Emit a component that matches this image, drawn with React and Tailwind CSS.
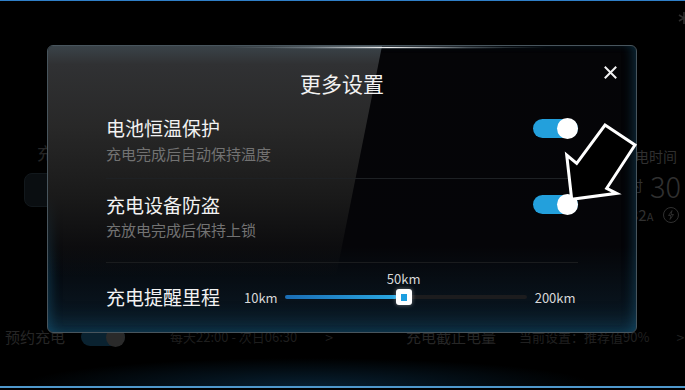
import React from 'react'

const Toggle = () => (
  <div className="w-[45px] h-[19px] rounded-full bg-[#23a0dc] flex items-center justify-end shrink-0">
    <div className="w-[21px] h-[21px] rounded-full bg-white shrink-0" />
  </div>
)

const SettingRow = ({ title, desc, top, bottom }) => (
  <div className={`flex flex-col ${top}`}>
    <div className="flex items-center justify-between h-[24px]">
      <span className="text-[19px] leading-[24px] text-[#f2f2f2]">{title}</span>
      <Toggle />
    </div>
    <span className={`text-[15px] leading-[20px] text-[#727272] ${bottom}`}>{desc}</span>
  </div>
)

const Modal = () => (
  <div className="absolute left-[47px] top-[45px] w-[590px] h-[288px] rounded-[6px] border border-[#48555d] bg-[linear-gradient(180deg,#050507_0%,#050508_70%,#0a1a26_100%)] shadow-[inset_8px_0_12px_-6px_rgba(30,110,150,0.35),inset_-8px_0_12px_-6px_rgba(30,110,150,0.35),inset_0_-16px_22px_-10px_rgba(30,110,150,0.35)] overflow-hidden">
    {/* glossy diagonal sheen */}
    <div className="absolute left-0 top-0 w-[340px] h-[230px] [clip-path:polygon(0_0,334px_0,288px_230px,0_230px)] bg-[linear-gradient(180deg,#3a4349_0%,#303133_8%,#282828_35%,#1a1a1a_65%,rgba(12,12,12,0)_100%)]" />
    <div className="absolute left-[180px] top-0 w-[320px] h-[3px] bg-[radial-gradient(ellipse_at_center,rgba(255,255,255,0.95)_0%,rgba(200,215,225,0.35)_35%,transparent_70%)]" />

    <div className="relative flex flex-col px-[58px] pt-[26px] h-full">
      <div className="text-center text-[21px] leading-[22px] text-[#f2f2f2]">更多设置</div>
      <svg className="absolute top-[20px] right-[19px]" width="13" height="13" viewBox="0 0 13 13">
        <path d="M1.5 1.5l10 10M11.5 1.5l-10 10" stroke="#f2f2f2" strokeWidth="2" strokeLinecap="square" />
      </svg>

      <SettingRow title="电池恒温保护" desc="充电完成后自动保持温度" top="mt-[22px]" bottom="mt-[4px] mb-[14px]" />
      <div className="h-px bg-[#1e2124]" />
      <SettingRow title="充电设备防盗" desc="充放电完成后保持上锁" top="mt-[14px]" bottom="mt-[3px] mb-[22px]" />
      <div className="h-px bg-[#1a1c1e]" />

      <div className="flex items-center h-[71px] whitespace-nowrap">
        <span className="shrink-0 text-[19px] leading-[24px] text-[#f2f2f2]">充电提醒里程</span>
        <span className="ml-[24px] text-[13px] text-[#d8d8d8]">10km</span>
        <div className="ml-[7px] w-[242px] h-[4px] shrink-0 rounded-full bg-[#1c1c1e] relative">
          <div className="w-[112px] h-full rounded-full bg-[linear-gradient(90deg,#1a6db5,#2aa8e2)]" />
          <div className="absolute left-[111px] top-[-6px] w-[16px] h-[16px] rounded-[3px] bg-white flex items-center justify-center shadow-[0_0_4px_rgba(255,255,255,0.4)]">
            <div className="w-[6px] h-[7px] bg-[#1c9ee0]" />
          </div>
          <span className="absolute left-[119px] top-[-24px] -translate-x-1/2 text-[13px] leading-[16px] text-[#d8d8d8]">50km</span>
        </div>
        <span className="ml-[8px] text-[13px] text-[#d8d8d8]">200km</span>
      </div>
    </div>
  </div>
)

export default function App() {
  return (
    <div className="w-[685px] h-[390px] relative overflow-hidden bg-black flex flex-col font-['Noto_Sans_CJK_SC','Liberation_Sans',sans-serif]">
      <div className="h-[1px] bg-[#2f7fc8] shrink-0" />
      <div className="mt-[10px] h-[14px] flex justify-end shrink-0">
        <svg className="-mr-[5px]" width="12" height="14" viewBox="0 0 12 14">
          <path d="M6 1v12M1 4l10 6M11 4L1 10" stroke="#2e2e2e" strokeWidth="1.6" />
        </svg>
      </div>

      {/* dim page behind overlay */}
      <div className="mt-[118px] flex justify-between shrink-0">
        <div className="flex flex-col pl-[24px]">
          <span className="pl-[13px] text-[17px] leading-[20px] text-[#262626]">充电功率</span>
          <div className="mt-[10px] w-[150px] h-[34px] rounded-[8px] bg-[#0a0e11] border border-[#12181c]" />
        </div>
        <div className="w-[64px] flex flex-col whitespace-nowrap text-[#303030]">
          <span className="mt-[3px] text-[14px] leading-[20px]">充电时间</span>
          <div className="mt-[5px] -ml-[6px] flex items-center h-[28px]">
            <span className="text-[14px] leading-[16px]">小时</span>
            <span className="ml-[7px] text-[29px] leading-[28px] font-extralight">30</span>
          </div>
          <div className="mt-[8px] flex items-center h-[16px] ml-[9px]">
            <span className="text-[15px]">3</span>
            <span className="text-[15px]">2</span>
            <span className="text-[11px] mt-[3px]">A</span>
            <span className="ml-[10px] w-[16px] h-[16px] rounded-full border border-[#303030] flex items-center justify-center">
              <svg width="8" height="10" viewBox="0 0 8 10">
                <path d="M5 0.5L1.5 5.5h2.5L3 9.5l3.5-5H4z" fill="none" stroke="#303030" strokeWidth="0.9" />
              </svg>
            </span>
          </div>
        </div>
      </div>

      <div className="mt-auto flex items-center h-[18px] shrink-0 whitespace-nowrap">
        <span className="ml-[5px] text-[15px] text-[#262626]">预约充电</span>
        <div className="ml-[16px] w-[44px] h-[18px] rounded-full bg-[#0a2230] flex items-center justify-end">
          <div className="w-[19px] h-[19px] rounded-full bg-[#2a2a2a]" />
        </div>
        <span className="ml-[45px] text-[13px] text-[#1e1e1e]">每天22:00 - 次日06:30</span>
        <span className="ml-[28px] text-[14px] text-[#222]">&gt;</span>
        <span className="ml-[73px] text-[15px] text-[#262626]">充电截止电量</span>
        <span className="ml-[23px] text-[13px] text-[#202020]">当前设置：推荐值90%</span>
        <span className="ml-[27px] text-[14px] text-[#222]">&gt;</span>
      </div>
      <div className="h-[40px] shrink-0 bg-[radial-gradient(ellipse_60%_100%_at_45%_100%,rgba(20,90,140,0.35),transparent_70%)]" />
      <div className="h-[2px] bg-[#4f98cc] shrink-0" />
      <div className="h-[2px] shrink-0" />

      <Modal />

      <svg className="absolute inset-0 pointer-events-none" width="685" height="390" viewBox="0 0 685 390">
        <polygon
          points="605,125 635,145 606.7,188.3 616.7,193.3 571.7,199.3 566.7,155 576.7,163.3"
          fill="#000"
          stroke="#fff"
          strokeWidth="3"
          strokeLinejoin="miter"
        />
      </svg>
    </div>
  )
}
